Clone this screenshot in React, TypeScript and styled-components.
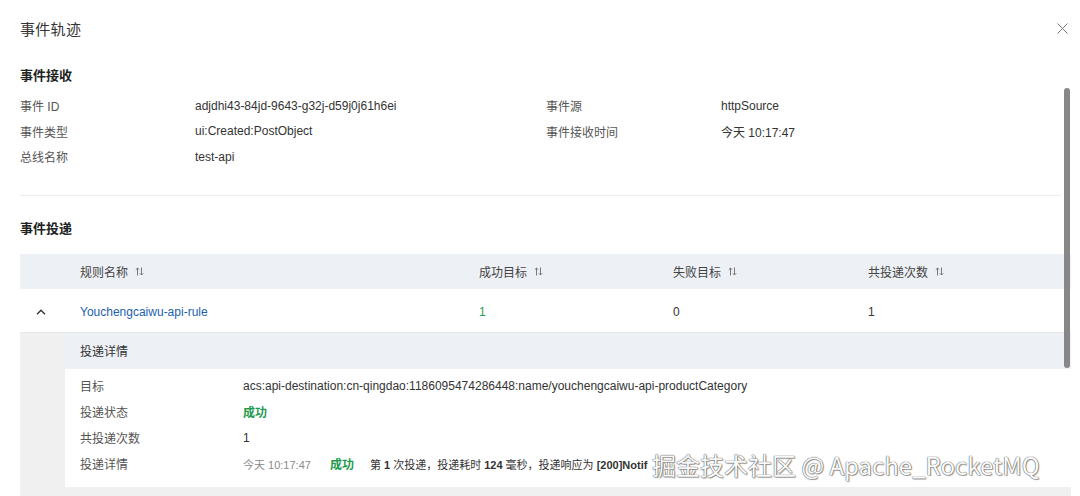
import React from "react";
import styled, { createGlobalStyle } from "styled-components";

const Global = createGlobalStyle`
  html, body { margin: 0; padding: 0; background: #fff; }
  body { font-family: "Liberation Sans", "Noto Sans CJK SC", sans-serif; color: #333; }
  * { box-sizing: border-box; }
`;

const Drawer = styled.div`
  position: relative;
  width: 1080px;
  height: 496px;
  overflow: hidden;
  background: #fff;
`;

const TopBar = styled.div`
  height: 56px;
  padding: 0 12px 0 20px;
  display: flex;
  align-items: center;
  justify-content: space-between;
`;

const Title = styled.div`
  font-size: 15px;
  color: #333;
  letter-spacing: 0.3px;
`;

const CloseBtn = styled.div`
  width: 12px;
  height: 12px;
  display: flex;
  align-items: center;
  justify-content: center;
`;

const Body = styled.div`
  padding: 0 9px 0 20px;
`;

const SectionTitle = styled.div<{ $top: number }>`
  margin-top: ${(p) => p.$top}px;
  height: 20px;
  line-height: 20px;
  font-size: 13px;
  font-weight: 700;
  color: #222;
`;

const InfoGrid = styled.div`
  margin-top: 7px;
  display: grid;
  grid-template-columns: 175px 351px 175px 1fr;
  grid-auto-rows: 25.5px;
  align-items: center;
  font-size: 12px;
`;

const Label = styled.div`
  color: #555;
`;

const Value = styled.div`
  color: #333;
`;

const Divider = styled.div`
  margin-top: 25px;
  height: 1px;
  background: #ececec;
  margin-right: 10px;
`;

const Table = styled.div`
  margin-top: 15px;
  font-size: 12px;
`;

const Row = styled.div<{ $head?: boolean }>`
  display: grid;
  grid-template-columns: 60px 399px 194px 195px 1fr;
  align-items: center;
  height: ${(p) => (p.$head ? 35 : 44)}px;
  padding-top: ${(p) => (p.$head ? 0 : 3)}px;
  background: ${(p) => (p.$head ? "#edf0f5" : "#fff")};
  border-bottom: ${(p) => (p.$head ? "none" : "1px solid #e8e8e8")};
  color: #333;
`;

const HeadCell = styled.div`
  display: flex;
  align-items: center;
  gap: 7px;
  color: #444;
`;

const ExpandCell = styled.div`
  display: flex;
  justify-content: flex-start;
  align-items: center;
  padding-left: 16px;
`;

const Link = styled.span`
  color: #1c5fae;
`;

const Green = styled.span<{ $bold?: boolean }>`
  color: #1f9a4f;
  font-weight: ${(p) => (p.$bold ? 700 : 400)};
`;

const Expanded = styled.div`
  background: #f0f0f1;
  padding: 0 0 9px 45px;
`;

const Panel = styled.div`
  background: #fff;
  padding-bottom: 10px;
`;

const PanelHead = styled.div`
  height: 36px;
  display: flex;
  align-items: center;
  padding-left: 15px;
  background: #edf0f5;
  color: #333;
  font-size: 12px;
`;

const DetailGrid = styled.div`
  padding: 4px 0 0 15px;
  display: grid;
  grid-template-columns: 163px 1fr;
  grid-auto-rows: 26px;
  align-items: center;
  font-size: 12px;
`;

const LogLine = styled.div`
  display: flex;
  align-items: center;
  white-space: nowrap;
`;

const LogTime = styled.span`
  color: #8a8a8a;
  font-size: 11px;
  margin-right: 19px;
`;

const LogText = styled.span`
  font-size: 11px;
  color: #333;
  margin-left: 16px;
  b { font-weight: 700; }
`;

const ScrollThumb = styled.div`
  position: absolute;
  right: 10px;
  top: 88px;
  width: 6px;
  height: 280px;
  border-radius: 3px;
  background: #878787;
`;

const Watermark = styled.div`
  position: absolute;
  left: 652px;
  top: 449px;
  font-family: "Noto Sans CJK SC", "Noto Sans", sans-serif;
  font-size: 24px;
  line-height: 32px;
  color: #fafafa;
  white-space: nowrap;
  text-shadow: 0 0 1px #555, 0 0 1px #555, 1px 1px 1px rgba(0, 0, 0, 0.35);
`;

const SortIcon = () => (
  <svg width="9" height="9" viewBox="0 0 9 9" fill="none" stroke="#777" strokeWidth="1">
    <path d="M2.5 8.5V1M0.8 2.7L2.5 1L4.2 2.7" />
    <path d="M6.5 0.5V8M4.8 6.3L6.5 8L8.2 6.3" />
  </svg>
);

const Head = ({ children }: { children: React.ReactNode }) => (
  <HeadCell>
    {children}
    <SortIcon />
  </HeadCell>
);

export default function App() {
  return (
    <Drawer>
      <Global />
      <TopBar>
        <Title>事件轨迹</Title>
        <CloseBtn>
          <svg width="11" height="11" viewBox="0 0 11 11" stroke="#777" strokeWidth="1">
            <path d="M0.5 0.5L10.5 10.5M10.5 0.5L0.5 10.5" />
          </svg>
        </CloseBtn>
      </TopBar>
      <Body>
        <SectionTitle $top={10}>事件接收</SectionTitle>
        <InfoGrid>
          <Label>事件 ID</Label>
          <Value>adjdhi43-84jd-9643-g32j-d59j0j61h6ei</Value>
          <Label>事件源</Label>
          <Value>httpSource</Value>
          <Label>事件类型</Label>
          <Value>ui:Created:PostObject</Value>
          <Label>事件接收时间</Label>
          <Value>今天 10:17:47</Value>
          <Label>总线名称</Label>
          <Value>test-api</Value>
        </InfoGrid>
        <Divider />
        <SectionTitle $top={23}>事件投递</SectionTitle>
        <Table>
          <Row $head>
            <div />
            <Head>规则名称</Head>
            <Head>成功目标</Head>
            <Head>失败目标</Head>
            <Head>共投递次数</Head>
          </Row>
          <Row>
            <ExpandCell>
              <svg width="10" height="6" viewBox="0 0 10 6" fill="none" stroke="#333" strokeWidth="1.4">
                <path d="M1 5.2L5 1.2L9 5.2" />
              </svg>
            </ExpandCell>
            <Link>Youchengcaiwu-api-rule</Link>
            <Green>1</Green>
            <span>0</span>
            <span>1</span>
          </Row>
          <Expanded>
            <Panel>
              <PanelHead>投递详情</PanelHead>
              <DetailGrid>
                <Label>目标</Label>
                <Value>acs:api-destination:cn-qingdao:1186095474286448:name/youchengcaiwu-api-productCategory</Value>
                <Label>投递状态</Label>
                <Value>
                  <Green $bold>成功</Green>
                </Value>
                <Label>共投递次数</Label>
                <Value>1</Value>
                <Label>投递详情</Label>
                <LogLine>
                  <LogTime>今天 10:17:47</LogTime>
                  <Green $bold>成功</Green>
                  <LogText>
                    第 <b>1</b> 次投递，投递耗时 <b>124</b> 毫秒，投递响应为 <b>[200]Notif</b>
                  </LogText>
                </LogLine>
              </DetailGrid>
            </Panel>
          </Expanded>
        </Table>
      </Body>
      <ScrollThumb />
      <Watermark>掘金技术社区 @ Apache_RocketMQ</Watermark>
    </Drawer>
  );
}
